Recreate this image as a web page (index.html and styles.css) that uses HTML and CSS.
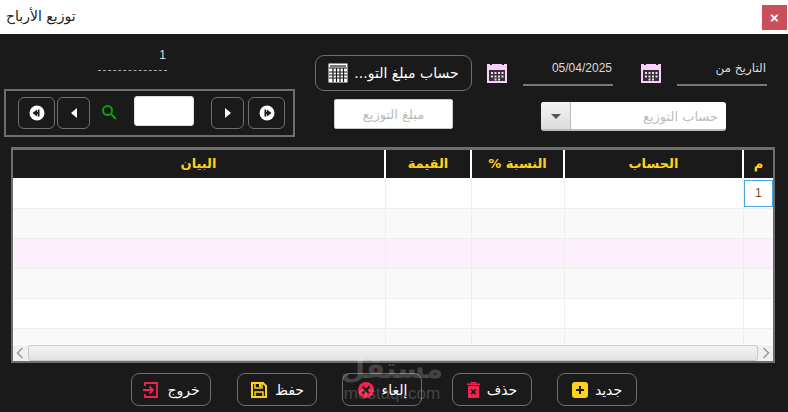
FILE: index.html
```html
<!DOCTYPE html>
<html lang="ar">
<head>
  <meta charset="UTF-8">
  <meta name="viewport" content="width=device-width, initial-scale=1.0">
  <title>توزيع الأرباح</title>
  <link rel="stylesheet" href="styles.css">
</head>
<body>
  <div class="titlebar">
    <span class="title">توزيع الأرباح</span>
    <button class="close">×</button>
  </div>
  <div class="window">
    <div class="top">
      <div class="pager-col">
        <div class="counter">
          <span class="counter-num">1</span>
          <span class="counter-line"></span>
        </div>
        <div class="pager">
          <button class="nav wide"><svg width="16" height="16" viewBox="0 0 16 16"><circle cx="8" cy="8" r="7.500" fill="#fff"/><path d="M3.500 8 8 4.500v2.300h.800V4.500h1.700v7H8.800V9.200H8v2.300z" fill="#1a1a1a"/></svg></button>
          <button class="nav"><svg width="10" height="12" viewBox="0 0 10 12"><path d="M8 1v10L2 6z" fill="#fff"/></svg></button>
          <svg class="search" width="16" height="16" viewBox="0 0 16 16"><circle cx="6.500" cy="6.500" r="4.500" fill="none" stroke="#129c12" stroke-width="2"/><path d="M10 10l5 5" stroke="#129c12" stroke-width="2"/></svg>
          <input class="page-input" type="text">
          <button class="nav"><svg width="10" height="12" viewBox="0 0 10 12"><path d="M2 1v10l6-5z" fill="#fff"/></svg></button>
          <button class="nav wide nav-end"><svg width="16" height="16" viewBox="0 0 16 16"><circle cx="8" cy="8" r="7.500" fill="#fff"/><path d="M12.500 8 8 4.500v2.300h-.800V4.500H5.500v7h1.700V9.200H8v2.300z" fill="#1a1a1a"/></svg></button>
        </div>
      </div>
      <div class="mid-col">
        <button class="calc-btn">
          <svg width="20" height="20" viewBox="0 0 20 20"><rect x="0.500" y="0.500" width="19" height="19" fill="#fff"/><path d="M1 5h18M1 9h18M1 12h18M1 15h18M5 5v14M8.500 5v14M12 5v14M15.500 5v14" stroke="#1a1a1a" stroke-width="1.200"/><rect x="2" y="2" width="16" height="2" fill="#777"/></svg>
          <span class="calc-text" dir="rtl">حساب مبلغ التو...</span>
        </button>
        <input class="amount" type="text" placeholder="مبلغ التوزيع" dir="rtl">
      </div>
      <div class="right-col">
        <div class="date-row">
          <svg class="cal" width="20" height="20" viewBox="0 0 20 20"><use href="#cal"/></svg>
          <div class="field date-field">05/04/2025</div>
          <svg class="cal" width="20" height="20" viewBox="0 0 20 20"><use href="#cal"/></svg>
          <div class="field label-field">التاريخ من</div>
        </div>
        <div class="combo">
          <span class="combo-arrow"></span>
          <span class="combo-text">حساب التوزيع</span>
        </div>
      </div>
    </div>

    <div class="grid">
      <table>
        <colgroup>
          <col class="c-note"><col class="c-value"><col class="c-pct"><col class="c-acc"><col class="c-num">
        </colgroup>
        <thead>
          <tr><th>البيان</th><th>القيمة</th><th>النسبة %</th><th>الحساب</th><th>م</th></tr>
        </thead>
        <tbody>
          <tr><td></td><td></td><td></td><td></td><td class="current"><span>1</span></td></tr>
          <tr class="alt"><td></td><td></td><td></td><td></td><td></td></tr>
          <tr class="pink"><td></td><td></td><td></td><td></td><td></td></tr>
          <tr class="alt"><td></td><td></td><td></td><td></td><td></td></tr>
          <tr><td></td><td></td><td></td><td></td><td></td></tr>
          <tr class="alt last"><td></td><td></td><td></td><td></td><td></td></tr>
        </tbody>
      </table>
      <div class="hscroll">
        <svg width="8" height="12" viewBox="0 0 8 12"><path d="M6.500 1 1.500 6l5 5" fill="none" stroke="#999" stroke-width="1.500"/></svg>
        <div class="thumb"></div>
        <svg width="8" height="12" viewBox="0 0 8 12"><path d="M1.500 1l5 5-5 5" fill="none" stroke="#999" stroke-width="1.500"/></svg>
      </div>
    </div>

    <div class="actions">
      <button class="act gap-a">
        <svg width="18" height="18" viewBox="0 0 18 18"><path d="M3 5V2h12v14H3v-3" fill="none" stroke="#f0244f" stroke-width="1.800"/><path d="M1 9h10M7.500 5.500 11 9l-3.500 3.500" fill="none" stroke="#f0244f" stroke-width="1.800"/></svg>
        <span>خروج</span>
      </button>
      <button class="act">
        <svg width="18" height="18" viewBox="0 0 18 18"><path d="M2 2h11l3 3v11H2z" fill="none" stroke="#ffd11a" stroke-width="2"/><path d="M5 2v5h7V2M5 16v-5h8v5" fill="none" stroke="#ffd11a" stroke-width="1.500"/><rect x="9" y="3" width="2" height="3" fill="#ffd11a"/></svg>
        <span>حفظ</span>
      </button>
      <button class="act gap-b">
        <svg width="18" height="18" viewBox="0 0 18 18"><circle cx="9" cy="9" r="8" fill="#f0244f"/><path d="M5.500 5.500l7 7M12.500 5.500l-7 7" stroke="#1a1a1a" stroke-width="2.200"/></svg>
        <span>إلغاء</span>
      </button>
      <button class="act">
        <svg width="13" height="18" viewBox="0 0 13 18"><path d="M1 5h11v12H1z" fill="#f0244f"/><rect x="0" y="2.500" width="13" height="1.500" fill="#f0244f"/><rect x="3.500" y="1" width="6" height="1.500" fill="#f0244f"/><path d="M4.200 8.500l4.600 4.600M8.800 8.500l-4.600 4.600" stroke="#1a1a1a" stroke-width="1.600"/></svg>
        <span>حذف</span>
      </button>
      <button class="act">
        <svg width="16" height="16" viewBox="0 0 16 16"><rect width="16" height="16" rx="3" fill="#ffd11a"/><path d="M8 4v8M4 8h8" stroke="#1a1a1a" stroke-width="2"/></svg>
        <span>جديد</span>
      </button>
    </div>

    <div class="watermark">
      <span class="wm-ar">مستقل</span>
      <span class="wm-en">mostaql.com</span>
    </div>
  </div>

  <svg width="0" height="0" class="defs">
    <symbol id="cal" viewBox="0 0 20 20">
      <path d="M0 1h3v1h2V1h10v1h2V1h3v19H0z" fill="#fbcffb"/>
      <rect x="2" y="7" width="16" height="11" fill="#333"/>
      <path d="M4 9h2v2H4zM7.500 9h2v2h-2zM11 9h2v2h-2zM14.500 9h2v2h-2zM4 12.500h2v2H4zM7.500 12.500h2v2h-2zM11 12.500h2v2h-2zM14.500 12.500h2v2h-2zM7.500 15.500h2v2h-2zM11 15.500h2v2h-2z" fill="#fbcffb"/>
    </symbol>
  </svg>
</body>
</html>
```

FILE: styles.css
```css
:root {
  --bg: #1a1a1a;
  --line: #6e6e6e;
  --cell-line: #eeeeee;
  --gold: #ffd11a;
}
html, body { margin:0; padding:0; width:788px; height:412px; overflow:hidden; background:var(--bg); font-family:'DejaVu Sans',sans-serif; }
button { font-family:inherit; background:transparent; padding:0; cursor:pointer; }
.defs { position:absolute; }

.titlebar { height:34px; background:#fff; display:flex; align-items:center; justify-content:space-between; padding:0 1px 0 6px; }
.title { font-size:14px; color:#222; padding-bottom:3px; }
.close { width:25px; height:25px; border:0; background:#c9505a; color:#fff; font:bold 15px/23px 'Liberation Sans',sans-serif; }

.window { height:378px; position:relative; }
.top { height:113px; display:flex; align-items:flex-start; }

.pager-col { width:291px; margin-left:4px; padding-top:14px; }
.counter { width:69px; margin-left:94px; display:flex; flex-direction:column; align-items:flex-end; color:#ddd; font:12px 'Liberation Sans',sans-serif; height:41px; }
.counter-num { margin-right:1px; line-height:14px; }
.counter-line { width:69px; margin-top:8px; border-top:1px dashed #aaa; }
.pager { width:291px; height:48px; box-sizing:border-box; border:2px solid var(--line); display:flex; align-items:center; padding:0 8px 0 12px; }
.nav { width:33px; height:32px; border:1px solid var(--line); border-radius:6px; display:flex; align-items:center; justify-content:center; flex:none; }
.nav.wide { width:37px; }
.nav + .nav { margin-left:2px; }
.nav + .nav-end { margin-left:4px; }
.search { margin:0 0 2px 11px; flex:none; }
.page-input { width:60px; height:30px; margin:-4px 17px 0 17px; box-sizing:border-box; border:1px solid #ddd; border-radius:3px; background:#fff; flex:none; }

.mid-col { width:157px; margin-left:20px; padding-top:21px; display:flex; flex-direction:column; align-items:center; }
.calc-btn { width:157px; height:36px; box-sizing:border-box; border:1px solid var(--line); border-radius:9px; color:#fff; font-size:14px; display:flex; align-items:center; justify-content:center; gap:6px; }
.calc-text { white-space:nowrap; }
.amount { width:119px; height:30px; margin-top:8px; box-sizing:border-box; border:1px solid #ccc; border-radius:2px; background:#fff; text-align:center; font-family:inherit; font-size:13px; }
.amount::placeholder { color:#bbb; }

.right-col { margin-left:15px; padding-top:21px; width:280px; }
.date-row { display:flex; align-items:flex-start; height:36px; }
.cal { margin-top:8px; }
.field { box-sizing:border-box; height:31px; border-bottom:2px solid #777; color:#ddd; font-size:12px; line-height:26px; text-align:right; padding-right:1px; }
.date-field { width:90px; margin:0 28px 0 16px; font-family:'Liberation Sans',sans-serif; font-size:12px; }
.label-field { width:90px; margin-left:16px; font-size:12px; }
.combo { width:185px; height:29px; margin:11px 0 0 54px; display:flex; background:#fff; border-radius:3px; border-bottom:2px solid #bbb; box-sizing:border-box; overflow:hidden; }
.combo-arrow { width:29px; background:linear-gradient(#f4f4f4,#dcdcdc); border-right:1px solid #bbb; position:relative; }
.combo-arrow::after { content:""; position:absolute; left:10px; top:12px; border:5px solid transparent; border-top:5px solid #555; border-bottom:0; }
.combo-text { flex:1; text-align:right; padding-right:8px; color:#bbb; font-size:13px; line-height:29px; }

.grid { margin:0 13px 0 11px; height:216px; box-sizing:border-box; border:2px solid var(--line); border-top-width:3px; background:#fff; display:flex; flex-direction:column; overflow:hidden; }
table { width:760px; table-layout:fixed; border-collapse:collapse; }
.c-note { width:372px; } .c-value { width:86px; } .c-pct { width:93px; } .c-acc { width:179px; } .c-num { width:30px; }
th { height:28px; box-sizing:border-box; padding:0; direction:rtl; background:var(--bg); color:var(--gold); font-size:13px; font-weight:bold; border-right:2px solid #fff; border-bottom:1px solid #fff; }
th:last-child { border-right:0; }
td { height:30px; box-sizing:border-box; padding:0; border-right:1px solid var(--cell-line); border-bottom:1px solid var(--cell-line); }
td:last-child { border-right:0; }
.alt td { background:#f9f9f9; }
.pink td { background:#fcf0fc; }
.last td { height:16px; border-bottom:0; }
.current { padding:1px 0 1px 0; vertical-align:top; }
.current span { display:block; height:27px; box-sizing:border-box; border:1px solid #4aa3df; color:#7a4a10; font:12px/25px 'Liberation Sans',sans-serif; text-align:center; }

.hscroll { height:16px; background:#f0f0f0; display:flex; align-items:center; padding:0 3px; gap:4px; margin-top:auto; }
.thumb { flex:1; height:14px; border:1px solid #c8c8c8; border-radius:3px; background:linear-gradient(#f4f4f4,#e2e2e2); }

.actions { display:flex; padding:10px 0 0 131px; gap:25px; }
.act { width:80px; height:33px; box-sizing:border-box; border:1px solid var(--line); border-radius:8px; color:#fff; font-size:14px; display:flex; align-items:center; justify-content:center; gap:7px; }
.gap-a { margin-right:1px; }
.gap-b { margin-right:5px; }

.watermark { position:absolute; left:342px; top:318px; width:100px; display:flex; flex-direction:column; align-items:center; color:rgba(255,255,255,.2); pointer-events:none; }
.wm-ar { font-size:28px; font-weight:bold; line-height:34px; }
.wm-en { font:17px/15px 'Liberation Sans',sans-serif; }
```
